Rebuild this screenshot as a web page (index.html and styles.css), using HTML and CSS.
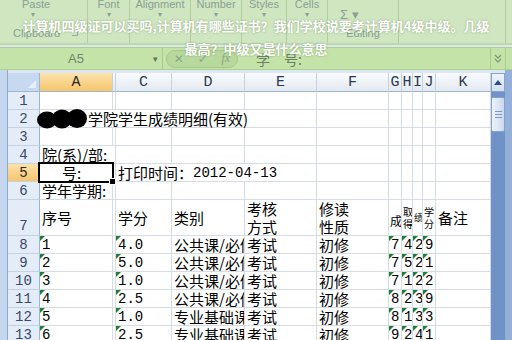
FILE: index.html
```html
<!DOCTYPE html>
<html>
    <head>
        <title>学院学生成绩明细</title>
        <meta charset="UTF-8">
        <link rel="stylesheet" href="styles.css">
    </head>
    <body>
        <div class="window">
            <!-- cinta de opciones -->
            <div class="ribbon">
                <div class="group g-clip">
                    <span class="gname">Paste</span>
                    <span class="drop">▾</span>
                    <span class="glabel">Clipboard<span class="launch"></span></span>
                </div>
                <div class="group g-font">
                    <span class="gname">Font</span>
                    <span class="drop">▾</span>
                </div>
                <div class="group g-align">
                    <span class="gname">Alignment</span>
                    <span class="drop">▾</span>
                </div>
                <div class="group g-num">
                    <span class="gname">Number</span>
                    <span class="drop">▾</span>
                </div>
                <div class="group g-styles">
                    <span class="gname">Styles</span>
                    <span class="drop">▾</span>
                </div>
                <div class="group g-cells">
                    <span class="gname">Cells</span>
                    <span class="drop">▾</span>
                </div>
                <div class="group g-edit">
                    <span class="gname"></span>
                    <span class="drop sigma">Σ ▾</span>
                    <span class="glabel">Editing</span>
                </div>
                <div class="ribbon-rest"></div>
            </div>

            <!-- barra de formulas -->
            <div class="fbar">
                <div class="namebox">A5<span class="nb-arrow">▾</span></div>
                <div class="fx-pill">
                    <span>✕</span>
                    <span>✓</span>
                    <span class="fx">fx</span>
                </div>
                <div class="finput">学　号:</div>
                <div class="expand">
                    <svg width="8" height="9" viewBox="0 0 8 9"><path d="M1 1 L4 4 L7 1 M1 5 L4 8 L7 5" fill="none" stroke="#7f9a7a" stroke-width="1.3"/></svg>
                </div>
                <div class="fright"></div>
            </div>

            <div class="sheet">
                <div class="edge"></div>
                <div class="grid">
                    <!-- cabecera de columnas -->
                    <div class="c corner"></div>
                    <div class="c ch sel">A</div>
                    <div class="c ch"></div>
                    <div class="c ch">C</div>
                    <div class="c ch">D</div>
                    <div class="c ch">E</div>
                    <div class="c ch">F</div>
                    <div class="c ch">G</div>
                    <div class="c ch">H</div>
                    <div class="c ch">I</div>
                    <div class="c ch">J</div>
                    <div class="c ch">K</div>

                    <!-- fila 1 -->
                    <div class="c rh">1</div>
                    <div class="c"></div><div class="c"></div><div class="c"></div><div class="c"></div>
                    <div class="c"></div><div class="c"></div><div class="c"></div><div class="c"></div>
                    <div class="c"></div><div class="c"></div><div class="c"></div>

                    <!-- fila 2 -->
                    <div class="c rh">2</div>
                    <div class="c span5 title-cell">
                        <svg class="blob" width="50" height="20" viewBox="0 0 50 20">
                            <ellipse cx="10" cy="11" rx="10" ry="8.5" fill="#000"/>
                            <ellipse cx="25" cy="10" rx="10" ry="9.5" fill="#000"/>
                            <ellipse cx="40" cy="9.5" rx="10" ry="9.5" fill="#000"/>
                        </svg>学院学生成绩明细(有效)
                    </div>
                    <div class="c"></div><div class="c"></div><div class="c"></div>
                    <div class="c"></div><div class="c"></div><div class="c"></div>

                    <!-- fila 3 -->
                    <div class="c rh">3</div>
                    <div class="c"></div><div class="c"></div><div class="c"></div><div class="c"></div>
                    <div class="c"></div><div class="c"></div><div class="c"></div><div class="c"></div>
                    <div class="c"></div><div class="c"></div><div class="c"></div>

                    <!-- fila 4 -->
                    <div class="c rh">4</div>
                    <div class="c span2 under">院(系)/部:</div>
                    <div class="c"></div><div class="c"></div><div class="c"></div>
                    <div class="c"></div><div class="c"></div><div class="c"></div>
                    <div class="c"></div><div class="c"></div><div class="c"></div>

                    <!-- fila 5 -->
                    <div class="c rh sel">5</div>
                    <div class="c active">号:</div>
                    <div class="c"></div>
                    <div class="c span3">打印时间：<span class="num">2012-04-13</span></div>
                    <div class="c"></div><div class="c"></div><div class="c"></div>
                    <div class="c"></div><div class="c"></div><div class="c"></div>

                    <!-- fila 6 -->
                    <div class="c rh">6</div>
                    <div class="c">学年学期:</div>
                    <div class="c"></div><div class="c"></div><div class="c"></div><div class="c"></div>
                    <div class="c"></div><div class="c"></div><div class="c"></div><div class="c"></div>
                    <div class="c"></div><div class="c"></div>

                    <!-- fila 7: encabezados -->
                    <div class="c rh tall">7</div>
                    <div class="c">序号</div>
                    <div class="c"></div>
                    <div class="c">学分</div>
                    <div class="c">类别</div>
                    <div class="c wrap">考核<br>方式</div>
                    <div class="c wrap">修读<br>性质</div>
                    <div class="c tiny big">成</div>
                    <div class="c tiny">取<br>得</div>
                    <div class="c tiny small">绩</div>
                    <div class="c tiny">学<br>分</div>
                    <div class="c">备注</div>

                    <!-- filas de datos -->
                    <div class="c rh">8</div>
                    <div class="c t"><span class="num">1</span></div>
                    <div class="c"></div>
                    <div class="c t"><span class="num">4.0</span></div>
                    <div class="c">公共课/必修</div>
                    <div class="c">考试</div>
                    <div class="c">初修</div>
                    <div class="c t d"><span class="num">7</span></div>
                    <div class="c t d"><span class="num">4</span></div>
                    <div class="c t d"><span class="num">2</span></div>
                    <div class="c t d"><span class="num">9</span></div>
                    <div class="c"></div>

                    <div class="c rh">9</div>
                    <div class="c t"><span class="num">2</span></div>
                    <div class="c"></div>
                    <div class="c t"><span class="num">5.0</span></div>
                    <div class="c">公共课/必修</div>
                    <div class="c">考试</div>
                    <div class="c">初修</div>
                    <div class="c t d"><span class="num">7</span></div>
                    <div class="c t d"><span class="num">5</span></div>
                    <div class="c t d"><span class="num">2</span></div>
                    <div class="c t d"><span class="num">1</span></div>
                    <div class="c"></div>

                    <div class="c rh">10</div>
                    <div class="c t"><span class="num">3</span></div>
                    <div class="c"></div>
                    <div class="c t"><span class="num">1.0</span></div>
                    <div class="c">公共课/必修</div>
                    <div class="c">考试</div>
                    <div class="c">初修</div>
                    <div class="c t d"><span class="num">7</span></div>
                    <div class="c t d"><span class="num">1</span></div>
                    <div class="c t d"><span class="num">2</span></div>
                    <div class="c t d"><span class="num">2</span></div>
                    <div class="c"></div>

                    <div class="c rh">11</div>
                    <div class="c t"><span class="num">4</span></div>
                    <div class="c"></div>
                    <div class="c t"><span class="num">2.5</span></div>
                    <div class="c">公共课/必修</div>
                    <div class="c">考试</div>
                    <div class="c">初修</div>
                    <div class="c t d"><span class="num">8</span></div>
                    <div class="c t d"><span class="num">2</span></div>
                    <div class="c t d"><span class="num">3</span></div>
                    <div class="c t d"><span class="num">9</span></div>
                    <div class="c"></div>

                    <div class="c rh">12</div>
                    <div class="c t"><span class="num">5</span></div>
                    <div class="c"></div>
                    <div class="c t"><span class="num">1.0</span></div>
                    <div class="c">专业基础课</div>
                    <div class="c">考试</div>
                    <div class="c">初修</div>
                    <div class="c t d"><span class="num">8</span></div>
                    <div class="c t d"><span class="num">1</span></div>
                    <div class="c t d"><span class="num">3</span></div>
                    <div class="c t d"><span class="num">3</span></div>
                    <div class="c"></div>

                    <div class="c rh">13</div>
                    <div class="c t"><span class="num">6</span></div>
                    <div class="c"></div>
                    <div class="c t"><span class="num">2.5</span></div>
                    <div class="c">专业基础课</div>
                    <div class="c">考试</div>
                    <div class="c">初修</div>
                    <div class="c t d"><span class="num">9</span></div>
                    <div class="c t d"><span class="num">2</span></div>
                    <div class="c t d"><span class="num">4</span></div>
                    <div class="c t d"><span class="num">1</span></div>
                    <div class="c"></div>
                </div>
                <div class="vscroll">
                    <div class="up"><span class="tri-up"></span></div>
                    <div class="thumb"><span class="grip"></span></div>
                </div>
                <div class="frame"></div>
            </div>

            <!-- titulo encima -->
            <div class="title">计算机四级证可以买吗,计算机有哪些证书？我们学校说要考计算机4级中级。几级<br>最高？中级又是什么意思</div>
        </div>
    </body>
</html>
```

FILE: styles.css
```css
body {
    margin: 0;
    background-color: #fff;
    font-family: "Noto Sans CJK SC", sans-serif;
}

.window {
    width: 512px;
    height: 340px;
    overflow: hidden;
    position: relative;
    background-color: #dde7f3;
}

/* cinta */
.ribbon {
    display: flex;
    height: 45px;
    background-color: #d0e6c1;
    border-bottom: 2px solid #bcd9a7;
    box-sizing: border-box;
}
.group {
    display: flex;
    flex-direction: column;
    align-items: center;
    border-right: 1px solid #b2cea0;
    box-sizing: border-box;
    font-family: "Liberation Sans", Arial, sans-serif;
    color: #88a093;
}
.gname {
    font-size: 11px;
    line-height: 10px;
    height: 10px;
    margin-top: -1px;
}
.drop {
    font-size: 8px;
    line-height: 12px;
    height: 12px;
    margin-top: 0;
}
.glabel {
    font-size: 11px;
    line-height: 12px;
    margin-top: 6px;
    display: flex;
    align-items: center;
}
.launch {
    width: 5px;
    height: 5px;
    margin-left: 12px;
    border-right: 1px solid #98ad9f;
    border-bottom: 1px solid #98ad9f;
}
.g-clip { width: 88px; align-items: flex-start; }
.g-clip .gname { margin-left: 22px; }
.g-clip .drop { margin-left: 31px; }
.g-clip .glabel { margin-left: 13px; }
.g-font { width: 42px; }
.g-align { width: 61px; }
.g-num { width: 51px; }
.g-styles { width: 45px; }
.g-cells { width: 41px; }
.g-edit { width: 71px; }
.g-edit .sigma {
    align-self: flex-start;
    margin-left: 12px;
    font-size: 13px;
}
.ribbon-rest {
    width: 106px;
    border-right: 1px solid #b2cea0;
}

/* barra de formulas */
.fbar {
    display: flex;
    align-items: center;
    height: 23px;
    margin-top: 2px;
    background-color: #c4e3a8;
    border-top: 1px solid #add090;
    border-bottom: 1px solid #add090;
    box-sizing: border-box;
}
.namebox {
    width: 163px;
    height: 100%;
    display: flex;
    align-items: center;
    padding-left: 68px;
    padding-right: 4px;
    box-sizing: border-box;
    border-right: 1px solid #a9ca8f;
    font: 13px "Liberation Sans", Arial, sans-serif;
    color: #71876a;
}
.nb-arrow {
    margin-left: auto;
    font-size: 9px;
    color: #5f7558;
}
.fx-pill {
    width: 72px;
    height: 18px;
    margin-left: 3px;
    border-radius: 10px;
    background-color: #b8d99d;
    border: 1px solid #a6c88b;
    box-sizing: border-box;
    display: flex;
    align-items: center;
    justify-content: space-around;
    font: 12px "DejaVu Sans", sans-serif;
    color: #8da489;
}
.fx {
    font: italic 12px "Liberation Serif", serif;
}
.finput {
    flex: 1;
    height: 100%;
    display: flex;
    align-items: center;
    padding-left: 18px;
    font-size: 14px;
    color: #6c7f64;
}
.expand {
    width: 14px;
    height: 100%;
    display: flex;
    align-items: center;
    justify-content: center;
    border-left: 1px solid #a9ca8f;
    border-right: 1px solid #a9ca8f;
}
.fright {
    width: 6px;
}

/* hoja */
.sheet {
    display: flex;
    height: 270px;
}
.edge {
    width: 8px;
    background-color: #c4d7ee;
    border-right: 1px solid #8fabd0;
    box-sizing: border-box;
}
.grid {
    margin-top: 3px;
    display: grid;
    grid-template-columns: 32px 73px 3px 56px 73px 72px 72px 13px 11px 10px 13px 55px;
    grid-template-rows: 19px repeat(6, 18px) 36px repeat(6, 18px);
    background-color: #fff;
    align-self: flex-start;
}
.c {
    display: flex;
    align-items: center;
    padding-left: 2px;
    border-right: 1px solid #d6dce6;
    border-bottom: 1px solid #d6dce6;
    box-sizing: border-box;
    font-size: 15px;
    line-height: 17px;
    white-space: nowrap;
    overflow: hidden;
    color: #000;
}
.num {
    font: 14px "Liberation Mono", "Courier New", monospace;
}
.ch {
    justify-content: center;
    padding-left: 0;
    background: linear-gradient(#f9fbfd, #e3e9f1);
    border-right: 1px solid #c6d1df;
    border-bottom: 1px solid #9eb6ce;
    font: 15px "Liberation Mono", monospace;
    color: #2b3a50;
}
.corner {
    position: relative;
    background-color: #c6d9f0;
    border-right: 1px solid #9eb6ce;
    border-bottom: 1px solid #9eb6ce;
}
.corner::after {
    content: "";
    position: absolute;
    right: 3px;
    bottom: 3px;
    border-left: 8px solid transparent;
    border-bottom: 8px solid #e9f0fa;
}
.rh {
    justify-content: center;
    padding-left: 0;
    background-color: #e4ecf7;
    border-right: 1px solid #9eb6ce;
    border-bottom: 1px solid #c3d2e5;
    font: 14px "Liberation Mono", monospace;
    color: #38496a;
}
.rh.tall {
    align-items: flex-end;
    padding-bottom: 1px;
}
.ch.sel,
.rh.sel {
    background: linear-gradient(#fce3ad, #f6c46b);
    color: #2a2a2a;
}

.span5 { grid-column: span 5; }
.span3 { grid-column: span 3; }
.span2 { grid-column: span 2; }
.title-cell { overflow: visible; }
.blob {
    margin-left: -5px;
    margin-right: 1px;
    flex-shrink: 0;
}
.under {
    text-decoration: underline;
    overflow: visible;
}

.active {
    position: relative;
    overflow: visible;
    padding-left: 22px;
}
.active::after {
    content: "";
    position: absolute;
    left: -2px;
    top: -2px;
    right: -2px;
    bottom: -2px;
    border: 2px solid #000;
    z-index: 2;
}
.active::before {
    content: "";
    position: absolute;
    right: -4px;
    bottom: -4px;
    width: 5px;
    height: 5px;
    background-color: #000;
    border: 1px solid #fff;
    z-index: 3;
}

.wrap {
    white-space: normal;
    line-height: 18px;
}
.tiny {
    font-size: 10px;
    line-height: 12px;
    padding-left: 1px;
    white-space: normal;
}
.tiny.big {
    font-size: 12px;
    padding-top: 7px;
}
.tiny.small {
    font-size: 9px;
}

/* triangulo verde: numero guardado como texto */
.t {
    position: relative;
}
.t::before {
    content: "";
    position: absolute;
    left: 0;
    top: 0;
    border-top: 5px solid #1a7f37;
    border-right: 5px solid transparent;
}
.d {
    padding-left: 2px;
}

/* barra de desplazamiento */
.vscroll {
    width: 14px;
    margin-top: 3px;
    background-color: #6f93c9;
    display: flex;
    flex-direction: column;
}
.up {
    height: 19px;
    background: linear-gradient(#eef3fa, #d3dff0);
    border: 1px solid #88a4cc;
    box-sizing: border-box;
    display: flex;
    align-items: center;
    justify-content: center;
}
.tri-up {
    border-left: 4px solid transparent;
    border-right: 4px solid transparent;
    border-bottom: 5px solid #2b4f8e;
}
.thumb {
    height: 35px;
    margin-top: 5px;
    background: linear-gradient(90deg, #edf3fb, #cbd9ee);
    border: 1px solid #87a2cb;
    border-radius: 2px;
    box-sizing: border-box;
    display: flex;
    align-items: center;
    justify-content: center;
}
.grip {
    width: 7px;
    height: 5px;
    border-top: 1px solid #8199bd;
    border-bottom: 1px solid #8199bd;
    position: relative;
}
.grip::after {
    content: "";
    position: absolute;
    left: 0;
    right: 0;
    top: 2px;
    border-top: 1px solid #8199bd;
}
.frame {
    width: 7px;
    background-color: #94afd8;
}

/* titulo superpuesto */
.title {
    position: absolute;
    top: 14px;
    left: 0;
    right: 0;
    text-align: center;
    color: #fff;
    font: bold 13px/23px "Noto Sans CJK SC", sans-serif;
    text-shadow: 0 0 2px rgba(70, 100, 50, 0.55);
}
```
